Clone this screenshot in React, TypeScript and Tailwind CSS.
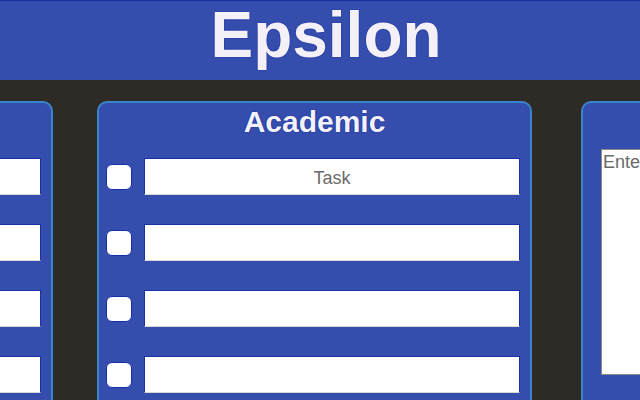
import React from "react";

function Checkbox() {
  return (
    <div className="h-[26px] w-[26px] shrink-0 rounded-[6px] border border-[#1530a8] bg-white" />
  );
}

function TaskInput({ placeholder }: { placeholder?: string }) {
  return (
    <input
      readOnly
      placeholder={placeholder}
      className="h-[37px] w-[376px] shrink-0 border border-[#1a31a6] border-b-[#d8d8d8] bg-white pt-[3px] text-center text-[18px] text-[#222] outline-none placeholder:text-[#6a6a6a] font-['Liberation_Sans',Arial,sans-serif]"
    />
  );
}

function TaskPanel({ title, first, className }: { title: string; first?: string; className?: string }) {
  return (
    <div
      className={`h-[320px] w-[435px] shrink-0 rounded-[10px] border-2 border-[#3a84c9] bg-[#354eae] pt-[4px] ${className ?? ""}`}
    >
      <h2 className="h-[30px] text-center text-[30px] font-bold leading-[30px] text-[#f4f2f8] [text-shadow:0_0_1px_#0b2096,0_0_1px_#0b2096]">
        {title}
      </h2>
      <div className="mt-[21px] flex flex-col gap-[29px] pl-[7px] pr-[10px]">
        {[first, undefined, undefined, undefined].map((p, i) => (
          <div key={i} className="flex items-center gap-[12px]">
            <Checkbox />
            <TaskInput placeholder={p} />
          </div>
        ))}
      </div>
    </div>
  );
}

export default function App() {
  return (
    <div className="h-[400px] w-[640px] overflow-hidden bg-[#2e2b26] font-['Liberation_Sans',Arial,sans-serif]">
      <header className="h-[80px] border-t border-[#1a2fa0] bg-[#354eae] pl-[12px] pt-[3px]">
        <h1 className="text-center text-[64px] font-bold leading-[63px] text-[#f3f1f7] [text-shadow:0_0_1px_#0b2096,0_0_1px_#0b2096]">
          Epsilon
        </h1>
      </header>
      <div className="ml-[-382px] mt-[21px] flex">
        <TaskPanel title="" />
        <TaskPanel title="Academic" first="Task" className="ml-[44px]" />
        <div className="ml-[49px] h-[320px] w-[435px] shrink-0 rounded-[10px] border-2 border-[#3a84c9] bg-[#354eae] pt-[4px]">
          <div className="h-[30px]" />
          <div className="mt-[12px] pl-[18px]">
            <textarea
              readOnly
              placeholder="Enter notes here..."
              className="block h-[226px] w-[395px] resize-none border border-[#8a8a8a] bg-white p-[1px] text-[18px] leading-[22px] text-[#222] outline-none placeholder:text-[#6a6a6a] font-['Liberation_Sans',Arial,sans-serif]"
            />
          </div>
        </div>
      </div>
    </div>
  );
}
